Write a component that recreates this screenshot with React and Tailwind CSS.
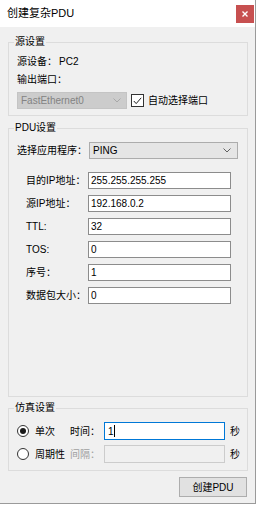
import React from 'react';

const Chevron = ({ color = '#606060' }) => (
  <svg width="8" height="5" viewBox="0 0 8 5" className="shrink-0">
    <path d="M0.5 0.5 L4 4 L7.5 0.5" fill="none" stroke={color} strokeWidth="1" />
  </svg>
);

const Group = ({ title, className, children }) => (
  <div className={`relative border border-[#dcdcdc] ${className}`}>
    <span className="absolute -top-[9px] left-[5px] bg-[#f0f0f0] px-[1px] leading-[16px]">{title}</span>
    {children}
  </div>
);

const Field = ({ label, value }) => (
  <div className="flex items-center h-[17px] mt-[6px] pl-[17px]">
    <span className="w-[62px] shrink-0">{label}</span>
    <div className="w-[143px] h-[17px] bg-white border border-[#8c8c8c] pl-[2px] leading-[15px]">{value}</div>
  </div>
);

const Radio = ({ checked }) => (
  <span className="w-[12px] h-[12px] rounded-full border border-[#333] bg-white flex items-center justify-center shrink-0">
    {checked && <span className="w-[6px] h-[6px] rounded-full bg-[#1a1a1a]" />}
  </span>
);

export default function App() {
  const fields = [
    ['目的IP地址：', '255.255.255.255'],
    ['源IP地址：', '192.168.0.2'],
    ['TTL:', '32'],
    ['TOS:', '0'],
    ['序号：', '1'],
    ['数据包大小：', '0'],
  ];

  return (
    <div className="w-[259px] h-[506px] bg-white text-[10px] text-black font-['Liberation_Sans','Noto_Sans_CJK_SC',sans-serif]">
      <div className="w-[256px] h-[504px] flex flex-col border-r border-b border-[#9a9a9a]">
        <div className="h-[27px] bg-white flex items-center pl-[7px] shrink-0">
          <span className="text-[11px]">创建复杂PDU</span>
          <div className="ml-auto mr-[1px] w-[18px] h-[18px] bg-[#c75050] flex items-center justify-center">
            <svg width="6" height="6" viewBox="0 0 6 6">
              <path d="M0.5 0.5 L5.5 5.5 M5.5 0.5 L0.5 5.5" stroke="#fff" strokeWidth="1.4" />
            </svg>
          </div>
        </div>

        <div className="flex-1 bg-[#f0f0f0] pl-[8px] pr-[7px] pt-[15px]">
          <Group title="源设置" className="h-[74px] pl-[8px] pt-[11px]">
            <div className="h-[16px] leading-[16px] flex">
              <span className="w-[42px]">源设备：</span>
              <span>PC2</span>
            </div>
            <div className="h-[16px] leading-[16px] mt-[2px]">输出端口：</div>
            <div className="flex items-center mt-[4px] h-[17px]">
              <div className="w-[110px] h-[17px] bg-[#cccccc] border border-[#c4c4c4] flex items-center pl-[3px] pr-[5px] text-[#838383]">
                <span>FastEthernet0</span>
                <span className="ml-auto"><Chevron color="#a8a8a8" /></span>
              </div>
              <span className="ml-[4px] w-[13px] h-[13px] border border-[#333] bg-white flex items-center justify-center">
                <svg width="9" height="8" viewBox="0 0 9 8">
                  <path d="M0.8 4 L3.2 6.6 L8.2 0.8" fill="none" stroke="#222" strokeWidth="1" />
                </svg>
              </span>
              <span className="ml-[4px]">自动选择端口</span>
            </div>
          </Group>

          <Group title="PDU设置" className="h-[269px] mt-[12px] pt-[13px]">
            <div className="flex items-center h-[17px] pl-[8px]">
              <span className="w-[72px] shrink-0">选择应用程序：</span>
              <div className="w-[149px] h-[17px] bg-[#e5e5e5] border border-[#acacac] flex items-center pl-[3px] pr-[6px]">
                <span>PING</span>
                <span className="ml-auto"><Chevron /></span>
              </div>
            </div>
            <div className="h-[7px]" />
            {fields.map(([label, value]) => (
              <Field key={label} label={label} value={value} />
            ))}
          </Group>

          <Group title="仿真设置" className="h-[63px] mt-[11px] pt-[13px] pl-[8px]">
            <div className="flex items-center h-[18px]">
              <Radio checked />
              <span className="ml-[6px] w-[35px]">单次</span>
              <span className="w-[34px]">时间：</span>
              <div className="w-[121px] h-[18px] bg-white border border-[#0078d7] pl-[3px] flex items-center">
                <span>1</span>
                <span className="w-[1px] h-[12px] bg-black" />
              </div>
              <span className="ml-[5px]">秒</span>
            </div>
            <div className="flex items-center h-[18px] mt-[5px]">
              <Radio />
              <span className="ml-[6px] w-[35px]">周期性</span>
              <span className="w-[34px] text-[#a0a0a0]">间隔：</span>
              <div className="w-[121px] h-[18px] bg-[#f0f0f0] border border-[#cccccc]" />
              <span className="ml-[5px]">秒</span>
            </div>
          </Group>

          <div className="flex justify-end mt-[6px] pr-[1px]">
            <button className="w-[68px] h-[20px] bg-[#e1e1e1] border border-[#adadad] text-[10px]">创建PDU</button>
          </div>
        </div>
      </div>
    </div>
  );
}
